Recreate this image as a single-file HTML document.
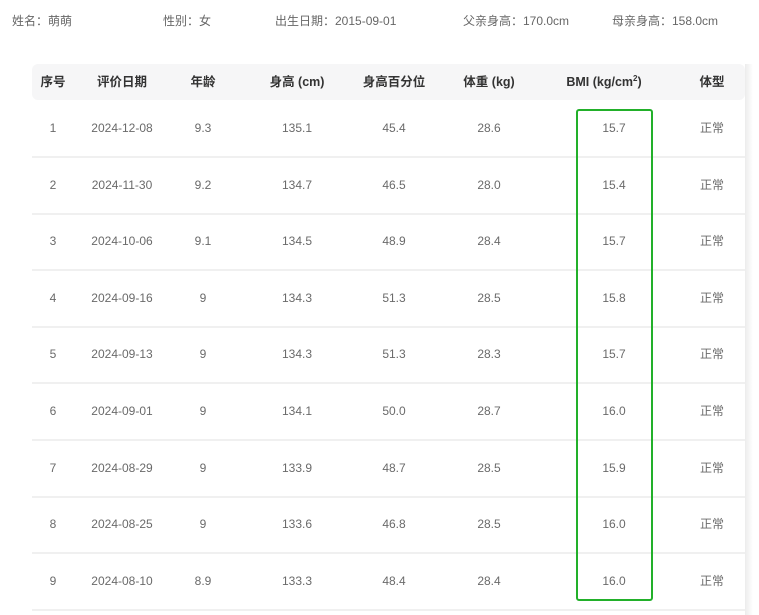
<!DOCTYPE html>
<html><head><meta charset="utf-8"><style>
body{margin:0;width:759px;height:615px;background:#fff;overflow:hidden;position:relative;font-family:"Liberation Sans","Noto Sans CJK SC",sans-serif;}
.info{position:absolute;top:13px;font-size:12px;line-height:16px;color:#666;white-space:nowrap}
.hdr{position:absolute;left:32px;top:64px;width:713px;height:36px;background:#f6f6f7;border-radius:6px}
.c{position:absolute;transform:translateX(-50%);white-space:nowrap;line-height:16px;height:16px}
.h{font-size:12.5px;font-weight:bold;color:#333;top:74px}
.h sup{font-size:8px;line-height:0;vertical-align:5px}
.line{position:absolute;left:32px;width:713px;height:2px;background:#f0f0f0}
.d{font-size:12px;color:#6a6a6a}
.shadow{position:absolute;left:745px;top:64px;width:8px;height:551px;background:linear-gradient(to right,#ececec,#fff)}
.box{position:absolute;left:576px;top:109px;width:73px;height:488px;border:2px solid #22b02a;border-radius:3px}
</style></head><body>
<div class="info" style="left:12px">姓名：萌萌</div>
<div class="info" style="left:163px">性别：女</div>
<div class="info" style="left:275px">出生日期：2015-09-01</div>
<div class="info" style="left:463px">父亲身高：170.0cm</div>
<div class="info" style="left:612px">母亲身高：158.0cm</div>
<div class="shadow"></div>
<div class="hdr"></div>
<div class="c h" style="left:53px">序号</div>
<div class="c h" style="left:122px">评价日期</div>
<div class="c h" style="left:203px">年龄</div>
<div class="c h" style="left:297px">身高 (cm)</div>
<div class="c h" style="left:394px">身高百分位</div>
<div class="c h" style="left:489px">体重 (kg)</div>
<div class="c h" style="left:604px">BMI (kg/cm<sup>2</sup>)</div>
<div class="c h" style="left:712px">体型</div>
<div id="rows"></div>
<script>
var data=[["1","2024-12-08","9.3","135.1","45.4","28.6","15.7"],
["2","2024-11-30","9.2","134.7","46.5","28.0","15.4"],
["3","2024-10-06","9.1","134.5","48.9","28.4","15.7"],
["4","2024-09-16","9","134.3","51.3","28.5","15.8"],
["5","2024-09-13","9","134.3","51.3","28.3","15.7"],
["6","2024-09-01","9","134.1","50.0","28.7","16.0"],
["7","2024-08-29","9","133.9","48.7","28.5","15.9"],
["8","2024-08-25","9","133.6","46.8","28.5","16.0"],
["9","2024-08-10","8.9","133.3","48.4","28.4","16.0"]];
var xs=[53,122,203,297,394,489,614,712],h="";
data.forEach(function(r,i){var y=120+i*56.6;
r.concat(["正常"]).forEach(function(t,j){h+='<div class="c d" style="left:'+xs[j]+'px;top:'+y+'px">'+t+'</div>';});
h+='<div class="line" style="top:'+(156+i*56.6)+'px"></div>';});
document.getElementById("rows").innerHTML=h;
</script>
<div class="box"></div>
</body></html>
